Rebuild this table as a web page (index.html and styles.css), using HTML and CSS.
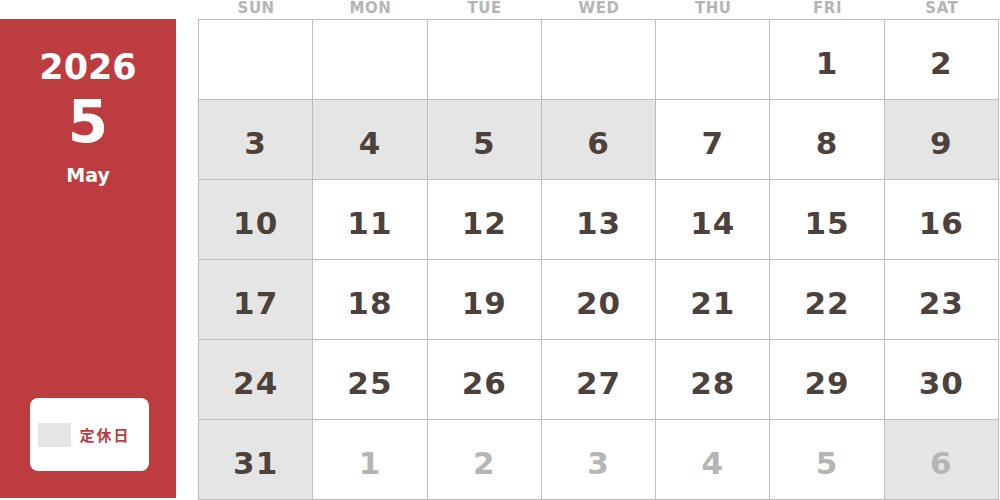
FILE: index.html
```html
<!DOCTYPE html>
<html lang="ja">
<head>
<meta charset="utf-8">
<link rel="stylesheet" href="styles.css">
</head>
<body>
<div class="page">
  <aside class="side">
    <div class="year">2026</div>
    <div class="month">5</div>
    <div class="mname">May</div>
    <div class="legend">
      <span class="swatch"></span>
      <span class="ltext">定休日</span>
    </div>
  </aside>
  <main class="cal">
    <div class="heads">
      <div>SUN</div><div>MON</div><div>TUE</div><div>WED</div><div>THU</div><div>FRI</div><div>SAT</div>
    </div>
    <div class="grid">
      <div class="c"></div><div class="c"></div><div class="c"></div><div class="c"></div><div class="c"></div><div class="c">1</div><div class="c">2</div>
      <div class="c off">3</div><div class="c off">4</div><div class="c off">5</div><div class="c off">6</div><div class="c">7</div><div class="c">8</div><div class="c off">9</div>
      <div class="c off">10</div><div class="c">11</div><div class="c">12</div><div class="c">13</div><div class="c">14</div><div class="c">15</div><div class="c">16</div>
      <div class="c off">17</div><div class="c">18</div><div class="c">19</div><div class="c">20</div><div class="c">21</div><div class="c">22</div><div class="c">23</div>
      <div class="c off">24</div><div class="c">25</div><div class="c">26</div><div class="c">27</div><div class="c">28</div><div class="c">29</div><div class="c">30</div>
      <div class="c off">31</div><div class="c next">1</div><div class="c next">2</div><div class="c next">3</div><div class="c next">4</div><div class="c next">5</div><div class="c off next">6</div>
    </div>
  </main>
</div>
</body>
</html>
```
FILE: styles.css
```css
html, body {
  margin: 0;
  padding: 0;
  background: #fff;
}
body {
  width: 1000px;
  height: 500px;
  overflow: hidden;
  font-family: "DejaVu Sans", Verdana, sans-serif;
}
.page {
  display: flex;
  gap: 22px;
  align-items: flex-start;
}
.side {
  margin-top: 19px;
  width: 176px;
  height: 479px;
  background: #bc3c3f;
  color: #fff;
  display: flex;
  flex-direction: column;
  align-items: center;
  font-weight: bold;
}
.year {
  margin-top: 27px;
  font-size: 35px;
  line-height: 42px;
}
.month {
  font-size: 58px;
  line-height: 64px;
  margin-top: 2px;
}
.mname {
  font-size: 19px;
  line-height: 24px;
  margin-top: 9px;
}
.legend {
  margin-top: auto;
  margin-bottom: 27px;
  margin-left: 2px;
  width: 119px;
  height: 73px;
  background: #fff;
  border-radius: 8px;
  display: flex;
  align-items: center;
  padding-left: 8px;
  box-sizing: border-box;
  gap: 9px;
}
.swatch {
  width: 33px;
  height: 24px;
  background: #e5e5e5;
}
.ltext {
  color: #bc3c3f;
  font-family: "Noto Sans CJK JP", sans-serif;
  font-weight: bold;
  font-size: 15px;
  letter-spacing: 2px;
}
.cal {
  width: 801px;
}
.heads {
  display: grid;
  grid-template-columns: repeat(7, 1fr);
  height: 19px;
  padding-left: 1px;
  color: #b5b5b5;
  font-weight: bold;
  font-size: 15px;
  line-height: 16px;
  text-align: center;
  letter-spacing: 0.5px;
}
.grid {
  display: grid;
  grid-template-columns: repeat(7, 1fr);
  grid-auto-rows: 80px;
  border-left: 1px solid #bdbdbd;
  border-top: 1px solid #bdbdbd;
}
.c {
  border-right: 1px solid #bdbdbd;
  border-bottom: 1px solid #bdbdbd;
  display: flex;
  align-items: center;
  justify-content: center;
  padding-top: 6px;
  box-sizing: border-box;
  color: #4d413c;
  font-weight: bold;
  font-size: 31px;
  letter-spacing: 1px;
}
.off {
  background: #e5e5e5;
}
.next {
  color: #b5b5b5;
}
```
